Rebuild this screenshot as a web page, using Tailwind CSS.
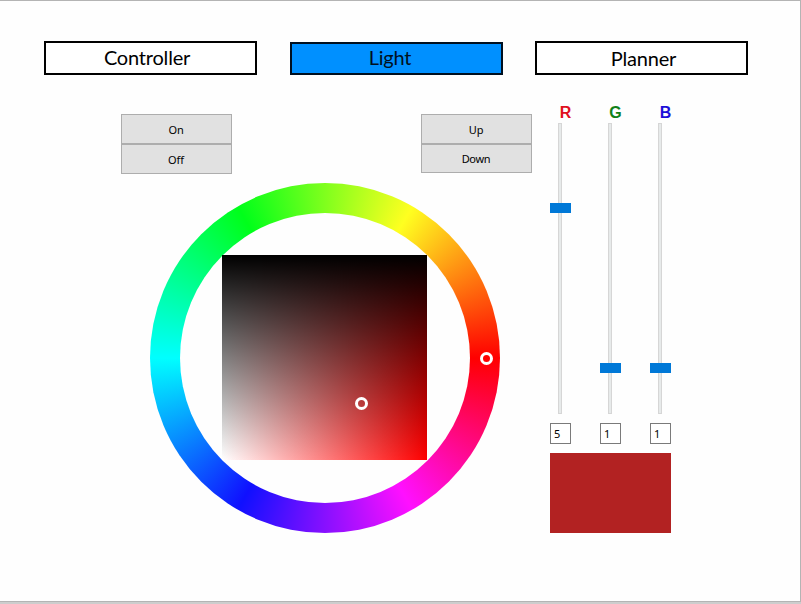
<!DOCTYPE html>
<html lang="en">
<head>
<meta charset="utf-8">
<title>Light</title>
<script src="https://cdn.jsdelivr.net/npm/@tailwindcss/browser@4"></script>
</head>
<body class="h-[604px] w-[801px] overflow-hidden bg-[#cdcdcd] font-['Noto_Sans',sans-serif] text-black">
<div class="h-[602px] w-[801px] border-t border-r border-b border-[#b4b4b4] bg-[#fefefe] pt-10">
  <nav class="ml-11 flex h-[34px] text-[20px] leading-[26px] tracking-[-0.2px] font-['Lato',sans-serif]">
    <button class="h-[34px] w-[213px] border-2 border-black bg-white pr-[7px] pb-[3px]">Controller</button>
    <button class="mt-px ml-[33px] h-[33px] w-[213px] border-2 border-[#001020] bg-[#0090ff] pr-[13px] pb-[3px] text-[#001020]">Light</button>
    <button class="ml-8 h-[34px] w-[213px] border-2 border-black bg-white pb-px pl-[4px]">Planner</button>
  </nav>
  <main class="flex">
    <section class="ml-[121px] w-[411px] pt-[39px]">
      <div class="flex justify-between text-[11px] leading-[28px] tracking-[-0.1px]">
        <div class="flex w-[111px] flex-col">
          <button class="h-[30px] border border-[#adadad] bg-[#e1e1e1] pr-px pt-px">On</button>
          <button class="h-[30px] border border-[#adadad] bg-[#e1e1e1] pr-px pt-px">Off</button>
        </div>
        <div class="flex w-[111px] flex-col">
          <button class="h-[30px] border border-[#adadad] bg-[#e1e1e1] pr-px pt-px">Up</button>
          <button class="h-[29px] border border-[#adadad] bg-[#e1e1e1] pr-px tracking-[-0.3px]">Down</button>
        </div>
      </div>
      <div class="relative mt-[9px] ml-[29px] grid size-[350px] place-items-center rounded-full bg-[conic-gradient(from_90deg,#ff0000,#ff10ff_60deg,#1010ff_120deg,#00ffff_180deg,#00ff1a_240deg,#ffff20_300deg,#ff0000_360deg)]">
        <div class="size-[290px] rounded-full bg-[#fefefe] pt-[42px] pl-[42px]">
          <div class="size-[205px] bg-[linear-gradient(to_bottom,#000,transparent),linear-gradient(to_right,#fff,#f00)]"></div>
        </div>
        <div class="absolute top-[169px] left-[329.5px] size-[13px] rounded-full border-3 border-white"></div>
        <div class="absolute top-[213.5px] left-[204.5px] size-[13px] rounded-full border-3 border-white"></div>
      </div>
    </section>
    <section class="ml-[18px] w-[121px] pt-[29px]">
      <div class="flex justify-between">
        <div class="flex w-[21px] flex-col items-center">
          <span class="h-[19px] pl-[10px] text-[16px] leading-[18px] font-bold text-[#e01020] font-['Liberation_Sans',sans-serif]">R</span>
          <div class="relative h-[291px] w-[21px]"><div class="ml-2 h-full w-1 border border-[#d6d6d6] bg-[#e7eaea]"></div><div class="absolute top-20 left-0 h-[10px] w-[21px] bg-[#0078d7]"></div></div>
          <div class="mt-[9px] h-[21px] w-[21px] border border-[#7a7a7a] bg-white pl-[3px] text-[11px] leading-[20px]">5</div>
        </div>
        <div class="flex w-[21px] flex-col items-center">
          <span class="h-[19px] pl-[10px] text-[16px] leading-[18px] font-bold text-[#108018] font-['Liberation_Sans',sans-serif]">G</span>
          <div class="relative h-[291px] w-[21px]"><div class="ml-2 h-full w-1 border border-[#d6d6d6] bg-[#e7eaea]"></div><div class="absolute top-60 left-0 h-[10px] w-[21px] bg-[#0078d7]"></div></div>
          <div class="mt-[9px] h-[21px] w-[21px] border border-[#7a7a7a] bg-white pl-[3px] text-[11px] leading-[20px]">1</div>
        </div>
        <div class="flex w-[21px] flex-col items-center">
          <span class="h-[19px] pl-[10px] text-[16px] leading-[18px] font-bold text-[#1c10d8] font-['Liberation_Sans',sans-serif]">B</span>
          <div class="relative h-[291px] w-[21px]"><div class="ml-2 h-full w-1 border border-[#d6d6d6] bg-[#e7eaea]"></div><div class="absolute top-60 left-0 h-[10px] w-[21px] bg-[#0078d7]"></div></div>
          <div class="mt-[9px] h-[21px] w-[21px] border border-[#7a7a7a] bg-white pl-[3px] text-[11px] leading-[20px]">1</div>
        </div>
      </div>
      <div class="mt-[9px] h-20 w-[121px] bg-[#b22222]"></div>
    </section>
  </main>
</div>
</body>
</html>
